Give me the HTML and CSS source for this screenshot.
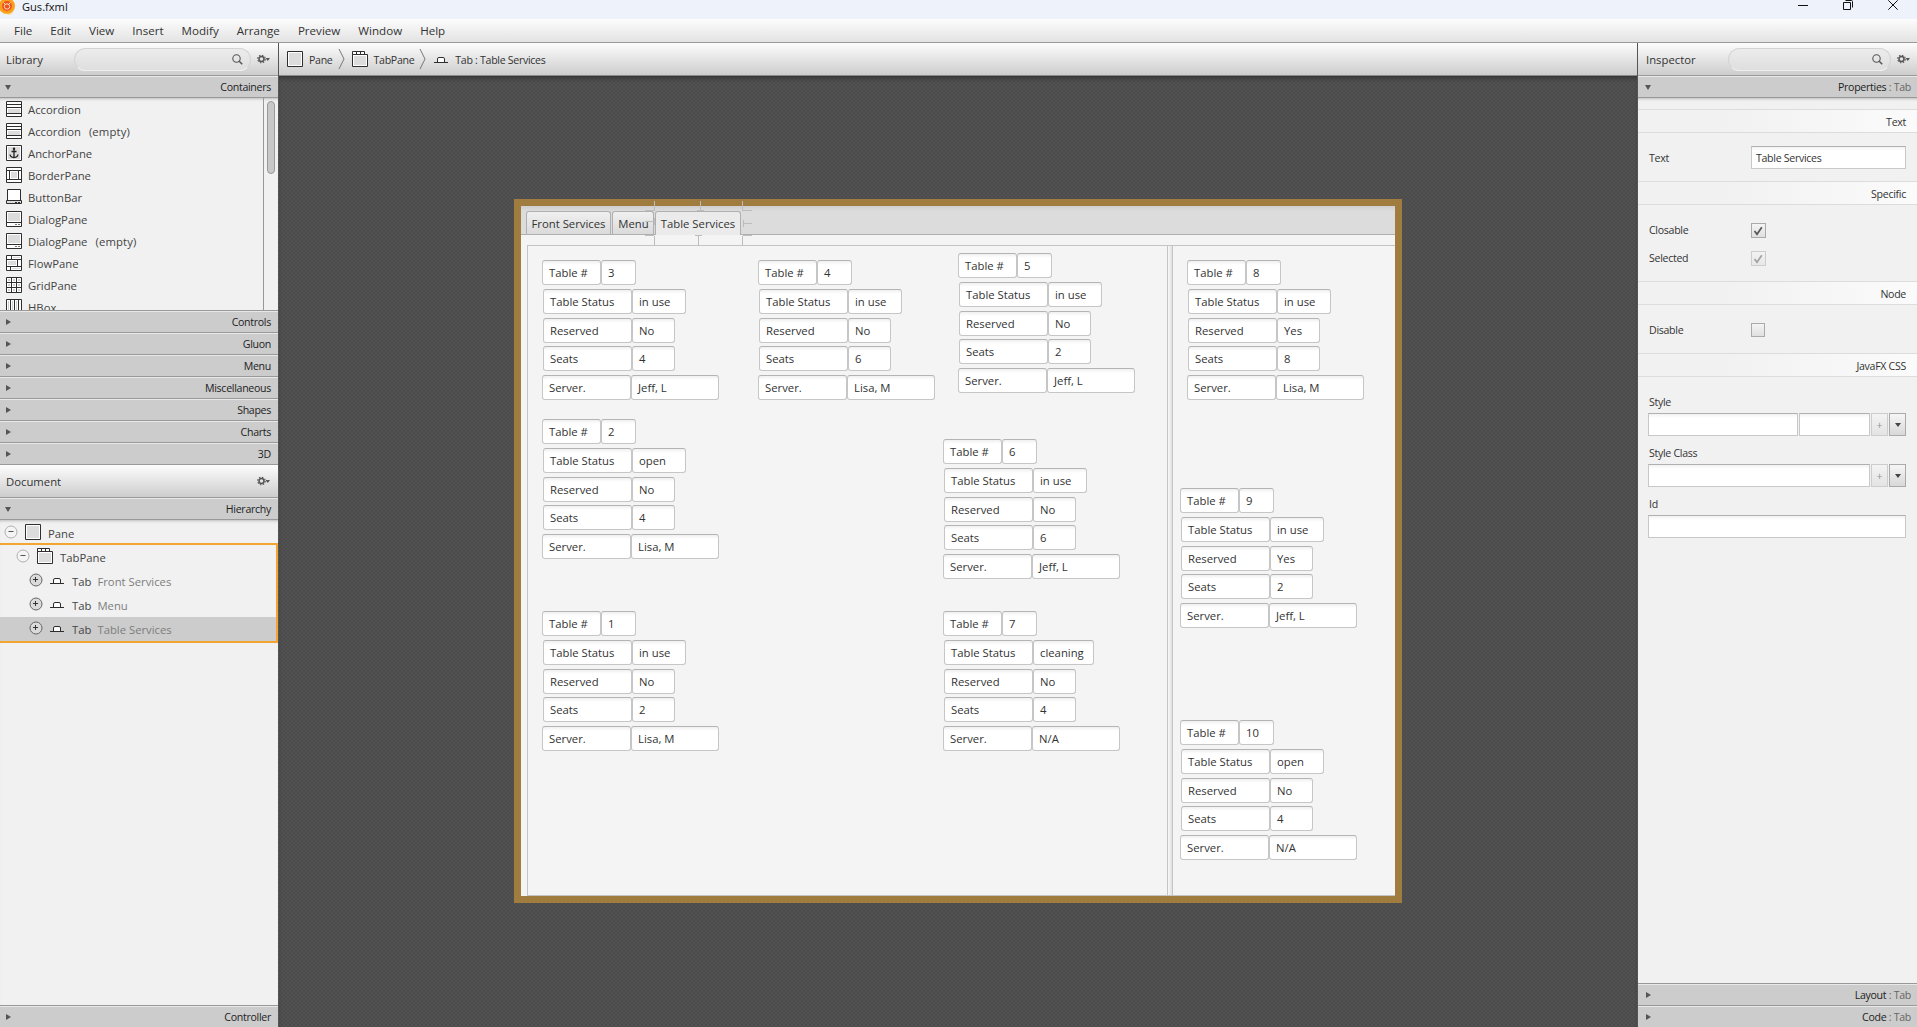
FILE: index.html
```html
<!DOCTYPE html>
<html lang="en">
<head>
<meta charset="utf-8">
<title>Gus.fxml</title>
<link rel="stylesheet" href="styles.css">
</head>
<body>
<svg class="defs" aria-hidden="true">
  <symbol id="pane" viewBox="0 0 16 16"><path fill="#fff" stroke="#2e2e2e" d="M.5.5h15v15H.5z"/><path fill="#dcdcdc" d="M2 2h12v12H2z"/></symbol>
  <symbol id="tabpane" viewBox="0 0 16 16"><path fill="#fff" stroke="#2e2e2e" d="M.5 3.5h15v12H.5zM.5.5h12v3H.5zM4.500.5v3M8.500.5v3"/><path fill="#dcdcdc" d="M2 5h12v9H2z"/></symbol>
  <symbol id="tab" viewBox="0 0 16 16"><path fill="#fff" stroke="#2e2e2e" d="M4.500 11V8q0-1.500 1.500-1.500h4q1.500 0 1.500 1.500v3"/><path stroke="#2e2e2e" d="M1 11.500h14"/></symbol>
  <symbol id="accordion" viewBox="0 0 16 16"><path fill="#fff" stroke="#2e2e2e" d="M.5.5h15v15H.5z"/><path fill="#dcdcdc" d="M2 8h12v4H2z"/><path stroke="#2e2e2e" d="M0 3.500h16M0 6.500h16M0 12.500h16"/></symbol>
  <symbol id="anchor" viewBox="0 0 16 16"><path fill="#fff" stroke="#2e2e2e" d="M.5.5h15v15H.5z"/><path fill="#dcdcdc" d="M2 2h12v12H2z"/><path fill="none" stroke="#222" stroke-width="1.300" d="M8 4v8.500M5.500 6.500h5M4 9.500q.5 3 4 3t4-3"/><circle cx="8" cy="3.700" r="1.200" fill="#222"/></symbol>
  <symbol id="border" viewBox="0 0 16 16"><path fill="#fff" stroke="#2e2e2e" d="M.5.5h15v15H.5zM.5 3.500h15M.5 12.500h15M3.500 3.500v9M12.500 3.500v9"/><path fill="#dcdcdc" d="M5 5h6v6H5z"/></symbol>
  <symbol id="buttonbar" viewBox="0 0 16 16"><path fill="#fff" stroke="#2e2e2e" d="M1.500.5h13v11h-13z"/><path fill="#dcdcdc" stroke="#2e2e2e" d="M.5 11.500h15v3H.5z"/><path stroke="#2e2e2e" d="M9 13.500h2M12 13.500h2"/></symbol>
  <symbol id="dialog" viewBox="0 0 16 16"><path fill="#fff" stroke="#2e2e2e" d="M.5.5h15v15H.5zM.5 11.500h15"/><path fill="#dcdcdc" d="M2 2h12v8H2z"/><path stroke="#777" d="M9 13.500h2M12 13.500h2"/></symbol>
  <symbol id="flow" viewBox="0 0 16 16"><path fill="#fff" stroke="#2e2e2e" d="M.5.5h15v15H.5zM.5 4.500h15M.5 11.500h15M5.500.5v4M11.500 4.500v7M4.500 11.500v4"/><path fill="#dcdcdc" d="M2 6h8v4H2zM7 2h7v1H7zM6 13h8v1H6z"/></symbol>
  <symbol id="gridpane" viewBox="0 0 16 16"><path fill="#fff" stroke="#2e2e2e" d="M.5.5h15v15H.5zM5.500.5v15M10.500.5v15M.5 5.500h15M.5 10.500h15"/><path fill="#d0d0d0" d="M2 2h2v2H2zM7 2h2v2H7zM12 2h2v2h-2zM2 7h2v2H2zM7 7h2v2H7zM12 7h2v2h-2zM2 12h2v2H2zM7 12h2v2H7zM12 12h2v2h-2z"/></symbol>
  <symbol id="hbox" viewBox="0 0 16 16"><path fill="#fff" stroke="#2e2e2e" d="M.5.500h15v15H.5zM4.500.5v15M8.500.5v15M12.500.5v15"/><path fill="#d0d0d0" d="M2 2h1v12H2zM6 2h1v12H6zM10 2h1v12h-1z"/></symbol>
  <symbol id="gear" viewBox="0 0 13 10"><circle cx="4.500" cy="5" r="2.500" fill="none" stroke="#555" stroke-width="1.500"/><circle cx="4.500" cy="5" r="3.800" fill="none" stroke="#555" stroke-width="1.100" stroke-dasharray="1.490"/><path fill="#555" d="M8.500 4h4.500l-2.250 3z"/></symbol>
  <symbol id="search" viewBox="0 0 11 11"><circle cx="4.500" cy="4.500" r="3.700" fill="none" stroke="#555" stroke-width="1.100"/><path stroke="#555" stroke-width="1.500" d="M7.200 7.200l3 3"/></symbol>
  <symbol id="minus" viewBox="0 0 14 14"><circle cx="7" cy="7" r="6" fill="#f4f4f4" stroke="#b0b0b0"/><path stroke="#555" d="M4.500 6.500h5"/></symbol>
  <symbol id="plus" viewBox="0 0 14 14"><circle cx="7" cy="7" r="6" fill="#dadada" stroke="#666"/><path stroke="#333" d="M4 6.500h5M6.500 4v5"/></symbol>
  <symbol id="chevron" viewBox="0 0 7 20"><path fill="none" stroke="#777" d="M1 0l5 10-5 10"/></symbol>
  <symbol id="check" viewBox="0 0 10 10"><path fill="none" stroke="currentColor" stroke-width="1.700" d="M1.500 5l2.500 3.300L8.800 1.300"/></symbol>
</svg>

<header class="titlebar">
  <svg class="logo" viewBox="0 0 18 18"><circle cx="7" cy="6" r="8" fill="#f9a11b"/><path fill="#ffd04a" d="M1 11q4 3 8 3t5-4q-1 4-4 4.500T1 11z"/><circle cx="7" cy="6" r="4.900" fill="#f04e23"/><circle cx="7" cy="6.500" r="2.700" fill="none" stroke="#ffe3b0"/><path stroke="#ffe3b0" d="M3.500 2.500l2 2M10.500 2.500l-2 2"/></svg>
  <span class="doc-name">Gus.fxml</span>
  <div class="win-buttons">
    <svg width="10" height="10" viewBox="0 0 10 10"><path stroke="#111" d="M0 5.500h10"/></svg>
    <svg width="10" height="10" viewBox="0 0 10 10"><path fill="none" stroke="#111" d="M.5 2.500h7v7h-7zM2.500.5h6q1 0 1 1v6"/></svg>
    <svg width="10" height="10" viewBox="0 0 10 10"><path stroke="#111" d="M.3.300l9.400 9.400M9.700.3L.3 9.700"/></svg>
  </div>
</header>
<nav class="menubar"><span>File</span><span>Edit</span><span>View</span><span>Insert</span><span>Modify</span><span>Arrange</span><span>Preview</span><span>Window</span><span>Help</span></nav>

<main class="workspace">
  <aside class="left">
    <div class="panel-head"><span>Library</span><div class="search"><svg><use href="#search"/></svg></div><svg class="gear"><use href="#gear"/></svg></div>
    <div class="bar open"><i></i><span>Containers</span></div>
    <div class="library">
      <ul>
        <li><svg><use href="#accordion"/></svg>Accordion</li>
        <li><svg><use href="#accordion"/></svg>Accordion<span>(empty)</span></li>
        <li><svg><use href="#anchor"/></svg>AnchorPane</li>
        <li><svg><use href="#border"/></svg>BorderPane</li>
        <li><svg><use href="#buttonbar"/></svg>ButtonBar</li>
        <li><svg><use href="#dialog"/></svg>DialogPane</li>
        <li><svg><use href="#dialog"/></svg>DialogPane<span>(empty)</span></li>
        <li><svg><use href="#flow"/></svg>FlowPane</li>
        <li><svg><use href="#gridpane"/></svg>GridPane</li>
        <li><svg><use href="#hbox"/></svg>HBox</li>
      </ul>
      <div class="scroll"><div class="thumb"></div></div>
    </div>
    <div class="bar"><i></i><span>Controls</span></div>
    <div class="bar"><i></i><span>Gluon</span></div>
    <div class="bar"><i></i><span>Menu</span></div>
    <div class="bar"><i></i><span>Miscellaneous</span></div>
    <div class="bar"><i></i><span>Shapes</span></div>
    <div class="bar"><i></i><span>Charts</span></div>
    <div class="bar"><i></i><span>3D</span></div>
    <div class="panel-head document"><span>Document</span><svg class="gear"><use href="#gear"/></svg></div>
    <div class="bar open"><i></i><span>Hierarchy</span></div>
    <div class="tree">
      <div class="node root"><svg class="toggle"><use href="#minus"/></svg><svg><use href="#pane"/></svg><b>Pane</b></div>
      <div class="branch">
        <div class="node level1"><svg class="toggle"><use href="#minus"/></svg><svg><use href="#tabpane"/></svg><b>TabPane</b></div>
        <div class="node level2"><svg class="toggle"><use href="#plus"/></svg><svg><use href="#tab"/></svg><b>Tab</b><em>Front Services</em></div>
        <div class="node level2"><svg class="toggle"><use href="#plus"/></svg><svg><use href="#tab"/></svg><b>Tab</b><em>Menu</em></div>
        <div class="node level2 selected"><svg class="toggle"><use href="#plus"/></svg><svg><use href="#tab"/></svg><b>Tab</b><em>Table Services</em></div>
      </div>
    </div>
    <div class="bar last"><i></i><span>Controller</span></div>
  </aside>

  <section class="center">
    <div class="crumbs">
      <svg class="ic"><use href="#pane"/></svg><span>Pane</span><svg class="chev"><use href="#chevron"/></svg>
      <svg class="ic"><use href="#tabpane"/></svg><span>TabPane</span><svg class="chev"><use href="#chevron"/></svg>
      <svg class="ic"><use href="#tab"/></svg><span>Tab : Table Services</span>
    </div>
    <div class="canvas">
      <div class="stage">
        <div class="tabs"><span class="tab">Front Services</span><span class="tab">Menu</span><span class="tab active">Table Services</span></div>
        <div class="tab-body">
          <div class="split">
            <div class="side wide"></div><div class="divider"></div><div class="side"></div>
          </div>
        </div>
        <svg class="handles" viewBox="0 0 108 45"><path fill="none" stroke="#bdbdbd" d="M9.500 0v10M55.500 0v9M52 9.500h7M97.500 0v10M0 9.500h9M98 9.500h9M0 20.500h9M9.500 17v7M98 22.500h9M98.500 19v7M0 34.500h9M98 34.500h9M9.500 35v10M53.500 35v10M50 34.500h7M97.500 35v10"/></svg>

        <div class="order" style="left:21px;top:54px"><p><span>Table #</span><span>3</span></p><p><span>Table Status</span><span>in use</span></p><p><span>Reserved</span><span>No</span></p><p><span>Seats</span><span>4</span></p><p><span>Server.</span><span>Jeff, L</span></p></div>
        <div class="order" style="left:237px;top:54px"><p><span>Table #</span><span>4</span></p><p><span>Table Status</span><span>in use</span></p><p><span>Reserved</span><span>No</span></p><p><span>Seats</span><span>6</span></p><p><span>Server.</span><span>Lisa, M</span></p></div>
        <div class="order" style="left:437px;top:47px"><p><span>Table #</span><span>5</span></p><p><span>Table Status</span><span>in use</span></p><p><span>Reserved</span><span>No</span></p><p><span>Seats</span><span>2</span></p><p><span>Server.</span><span>Jeff, L</span></p></div>
        <div class="order" style="left:666px;top:54px"><p><span>Table #</span><span>8</span></p><p><span>Table Status</span><span>in use</span></p><p><span>Reserved</span><span>Yes</span></p><p><span>Seats</span><span>8</span></p><p><span>Server.</span><span>Lisa, M</span></p></div>
        <div class="order" style="left:21px;top:213px"><p><span>Table #</span><span>2</span></p><p><span>Table Status</span><span>open</span></p><p><span>Reserved</span><span>No</span></p><p><span>Seats</span><span>4</span></p><p><span>Server.</span><span>Lisa, M</span></p></div>
        <div class="order" style="left:422px;top:233px"><p><span>Table #</span><span>6</span></p><p><span>Table Status</span><span>in use</span></p><p><span>Reserved</span><span>No</span></p><p><span>Seats</span><span>6</span></p><p><span>Server.</span><span>Jeff, L</span></p></div>
        <div class="order" style="left:659px;top:282px"><p><span>Table #</span><span>9</span></p><p><span>Table Status</span><span>in use</span></p><p><span>Reserved</span><span>Yes</span></p><p><span>Seats</span><span>2</span></p><p><span>Server.</span><span>Jeff, L</span></p></div>
        <div class="order" style="left:21px;top:405px"><p><span>Table #</span><span>1</span></p><p><span>Table Status</span><span>in use</span></p><p><span>Reserved</span><span>No</span></p><p><span>Seats</span><span>2</span></p><p><span>Server.</span><span>Lisa, M</span></p></div>
        <div class="order cleaning" style="left:422px;top:405px"><p><span>Table #</span><span>7</span></p><p><span>Table Status</span><span>cleaning</span></p><p><span>Reserved</span><span>No</span></p><p><span>Seats</span><span>4</span></p><p><span>Server.</span><span>N/A</span></p></div>
        <div class="order" style="left:659px;top:514px"><p><span>Table #</span><span>10</span></p><p><span>Table Status</span><span>open</span></p><p><span>Reserved</span><span>No</span></p><p><span>Seats</span><span>4</span></p><p><span>Server.</span><span>N/A</span></p></div>
      </div>
    </div>
  </section>

  <aside class="right">
    <div class="panel-head"><span>Inspector</span><div class="search"><svg><use href="#search"/></svg></div><svg class="gear"><use href="#gear"/></svg></div>
    <div class="bar open"><i></i><span>Properties <em>: Tab</em></span></div>
    <div class="props">
      <h3>Text</h3>
      <div class="row text-row"><label>Text</label><div class="input">Table Services</div></div>
      <h3>Specific</h3>
      <div class="checks">
        <div class="row"><label>Closable</label><div class="box"><svg><use href="#check"/></svg></div></div>
        <div class="row"><label>Selected</label><div class="box off"><svg><use href="#check"/></svg></div></div>
      </div>
      <h3>Node</h3>
      <div class="row disable-row"><label>Disable</label><div class="box small"></div></div>
      <h3>JavaFX CSS</h3>
      <div class="css">
        <label>Style</label>
        <div class="fields"><div class="input grow"></div><div class="input value"></div><div class="btn off">+</div><div class="btn"><i></i></div></div>
        <label>Style Class</label>
        <div class="fields"><div class="input grow"></div><div class="btn off">+</div><div class="btn"><i></i></div></div>
        <label>Id</label>
        <div class="fields"><div class="input grow"></div></div>
      </div>
    </div>
    <div class="bar"><i></i><span>Layout <em>: Tab</em></span></div>
    <div class="bar last"><i></i><span>Code <em>: Tab</em></span></div>
  </aside>
</main>
</body>
</html>
```

FILE: styles.css
```css
* { box-sizing: border-box; }
body {
  margin: 0;
  width: 1917px;
  height: 1027px;
  overflow: hidden;
  display: flex;
  flex-direction: column;
  font: 11.3px/16px "Open Sans", "Noto Sans", sans-serif;
  color: #333;
  background: #f1f1f1;
}
svg { display: block; flex: none; }
.defs { position: absolute; width: 0; height: 0; }
em { font-style: normal; }
b { font-weight: normal; }

/* window chrome */
.titlebar { flex: none; height: 19px; display: flex; background: #eef2fa; color: #111; }
.logo { width: 18px; height: 18px; margin-left: 0; }
.doc-name { margin: -1px 0 0 4px; font-size: 11.1px; }
.win-buttons { margin-left: auto; display: flex; gap: 35px; padding-right: 19px; }
.menubar {
  flex: none;
  height: 24px;
  display: flex;
  gap: 18px;
  padding: 4px 14px 0;
  font-size: 11.6px;
  background: linear-gradient(#fcfcfc, #e3e3e3);
  border-bottom: 1px solid #999;
}
.workspace { flex: 1; display: flex; min-height: 0; }

/* panels */
.left { width: 279px; border-right: 1px solid #555; display: flex; flex-direction: column; }
.right { width: 280px; border-left: 1px solid #555; display: flex; flex-direction: column; }
.panel-head {
  flex: none;
  height: 33px;
  display: flex;
  align-items: center;
  padding: 0 8px 0 6px;
  background: linear-gradient(#fdfdfd, #cdcdcd);
  border-bottom: 1px solid #999;
}
.panel-head > span { padding-top: 2px; }
.panel-head .gear { width: 13px; height: 10px; margin-left: 6px; }
.search {
  width: 177px;
  height: 23px;
  margin-left: auto;
  border: 1px solid #d4d4d4;
  border-bottom-color: #eee;
  border-radius: 12px;
  background: linear-gradient(#ececec, #dedede);
  display: flex;
  align-items: center;
  justify-content: flex-end;
  padding-right: 7px;
}
.search svg { width: 11px; height: 11px; }
.document .gear { margin-left: auto; }
.right .panel-head { padding: 0 7px 0 8px; }
.right .search { width: 163px; }

.bar {
  flex: none;
  height: 22px;
  display: flex;
  align-items: center;
  justify-content: space-between;
  padding: 0 7px 0 6px;
  background: #ccc;
  border-top: 1px solid #e8e8e8;
  border-bottom: 1px solid #999;
  font-size: 10.600px;
  letter-spacing: -.3px;
  color: #222;
}
.bar i { border: 3px solid transparent; border-left: 5px solid #555; border-right: 0; }
.bar.open i { margin-left: -1px; border: 3px solid transparent; border-top: 5px solid #555; border-bottom: 0; }
.bar.last { margin-bottom: -1px; }
.bar em { color: #666; }
.right .bar { padding: 0 6px 0 8px; }

/* library */
.library { flex: none; height: 213px; display: flex; overflow: hidden; border-bottom: 1px solid #999; box-shadow: inset 0 3px 3px -2px #bbb; }
.library ul { flex: 1; margin: 0; padding: 1px 0 0 6px; list-style: none; }
.library li { height: 22px; display: flex; align-items: center; gap: 6px; color: #444; }
.library li svg { width: 16px; height: 16px; margin-left: 0; margin-top: -2px; }
.library li span { margin-left: 2px; letter-spacing: .15px; }
.scroll { width: 15px; border-left: 1px solid #999; padding: 3px 3px; }
.thumb { width: 8px; height: 73px; border: 1px solid #999; border-radius: 4px; background: #c8c8c8; }

/* hierarchy */
.tree { flex: 1; border-bottom: 1px solid #999; padding-top: 1px; box-shadow: inset 0 3px 3px -2px #bbb; }
.node { height: 24px; display: flex; align-items: center; color: #444; }
.node b, .node em { padding-top: 1px; }
.node svg { width: 16px; height: 16px; margin: -2px 7px 0 6px; }
.node .toggle { width: 14px; height: 14px; margin: -2px 0 0 0; }
.node em { color: #7d7d7d; margin-left: 6px; }
.root { padding-left: 4px; }
.root svg:nth-child(2) { margin-left: 7px; }
.branch { margin-top: -2px; padding-top: 0; border: 2px solid #f2a530; border-left-width: 0; }
.level1 { padding-left: 16px; }
.level1 svg:nth-child(2) { margin-left: 7px; }
.level2 { padding-left: 29px; }
.level2 svg { margin-right: 7px; }
.selected { background: #ccc; }

/* breadcrumb and canvas */
.center { flex: 1; display: flex; flex-direction: column; min-width: 0; }
.crumbs {
  flex: none;
  height: 33px;
  display: flex;
  align-items: center;
  padding-left: 8px;
  background: linear-gradient(#fdfdfd, #cdcdcd);
  border-bottom: 1px solid #888;
  font-size: 10.600px;
  letter-spacing: -.3px;
}
.crumbs .ic { width: 16px; height: 16px; }
.crumbs span { margin: 1px 5px 0 6px; }
.crumbs .chev { width: 7px; height: 20px; margin-right: 7px; }
.canvas {
  flex: 1;
  padding: 123px 0 0 235px;
  background: #4e4e4e repeating-conic-gradient(#4b4b4b 0 25%, #525252 0 50%) 0 0 / 4px 4px;
  box-shadow: inset 0 4px 4px -2px #333;
}
.stage { position: relative; width: 888px; height: 704px; border: 7px solid #a07c3e; background: #f4f4f4; display: flex; flex-direction: column; }
.tabs {
  flex: none;
  height: 29px;
  display: flex;
  align-items: flex-end;
  gap: 2px;
  padding-left: 5px;
  background: linear-gradient(#cfcfcf, #dcdcdc 5px);
  border-bottom: 1px solid #b0b0b0;
}
.tab {
  width: 85px;
  height: 23px;
  border: 1px solid #b0b0b0;
  border-bottom: 0;
  border-radius: 3px 3px 0 0;
  background: linear-gradient(#f0f0f0, #dadada);
  text-align: center;
  line-height: 24px;
  white-space: nowrap;
}
.tab:nth-child(2) { width: 42px; margin-left: -1px; padding-left: 1px; }
.tab.active { width: 86px; height: 24px; margin: 0 0 -1px -1px; background: #ebebeb; }
.tab-body { flex: 1; padding: 10px 0 0 6px; }
.split { height: 100%; display: flex; border: 1px solid #c4c4c4; border-right: 0; }
.wide { width: 639px; }
.divider { width: 6px; border: solid #c4c4c4; border-width: 0 1px; background: linear-gradient(90deg, #f8f8f8, #e0e0e0); }
.handles { position: absolute; left: 124px; top: -5px; width: 108px; height: 45px; }

/* restaurant tables placed on the free canvas */
.order { position: absolute; }
.order p { display: flex; margin: 0 0 4px 1px; }
.order p:nth-child(1), .order p:nth-child(5) { margin-left: 0; }
.order p:nth-child(4) { margin-top: -1px; }
.order span {
  width: 89px;
  height: 25px;
  border: 1px solid #c6c6c6;
  border-top-color: #b4b4b4;
  border-radius: 3px;
  background: linear-gradient(#f0f0f0, #fff 4px);
  padding-left: 6px;
  line-height: 24px;
}
.order span + span { width: 43px; }
.order p:nth-child(1) span { width: 59px; }
.order p:nth-child(1) span + span { width: 35px; }
.order p:nth-child(2) span + span { width: 54px; }
.order.cleaning p:nth-child(2) span + span { width: 61px; }
.order p:nth-child(5) span + span { width: 88px; }

/* inspector */
.props { flex: 1; border-bottom: 1px solid #999; padding-top: 11px; font-size: 10.600px; letter-spacing: -.3px; box-shadow: inset 0 3px 3px -2px #bbb; }
.props h3 {
  height: 24px;
  margin: 0;
  padding-right: 11px;
  border: solid #dcdcdc;
  border-width: 1px 0;
  background: linear-gradient(90deg, #f1f1f1 30%, #fbfbfb);
  font: inherit;
  line-height: 24px;
  text-align: right;
}
.row { display: flex; align-items: center; padding-left: 11px; }
.row label { width: 102px; }
.text-row { height: 48px; }
.text-row label { padding-top: 2px; }
.text-row .input { width: 155px; margin-top: 1px; }
.input { height: 23px; border: 1px solid #c8c8c8; border-top-color: #b0b0b0; background: linear-gradient(#f2f2f2, #fff 4px); padding-left: 4px; line-height: 23px; }
.checks { height: 76px; padding-top: 11px; }
.checks .row { height: 28px; }
.box { width: 15px; height: 15px; border: 1px solid #aaa; background: linear-gradient(#f4f4f4, #e0e0e0); color: #555; padding: 2px 1px; }
.box svg { width: 10px; height: 10px; }
.box.off { opacity: .5; }
.box.small { width: 14px; height: 14px; }
.disable-row { height: 48px; padding-top: 2px; }
.css { padding: 17px 11px 0 10px; }
.css label { display: block; height: 19px; padding-left: 1px; }
.fields { display: flex; gap: 1px; margin-bottom: 9px; }
.grow { flex: 1; }
.value { width: 71px; }
.btn { width: 17px; height: 23px; border: 1px solid #aaa; background: linear-gradient(#f6f6f6, #d8d8d8); display: flex; align-items: center; justify-content: center; }
.btn i { border: 3px solid transparent; border-top: 4px solid #444; border-bottom: 0; }
.btn.off { opacity: .5; }
```
